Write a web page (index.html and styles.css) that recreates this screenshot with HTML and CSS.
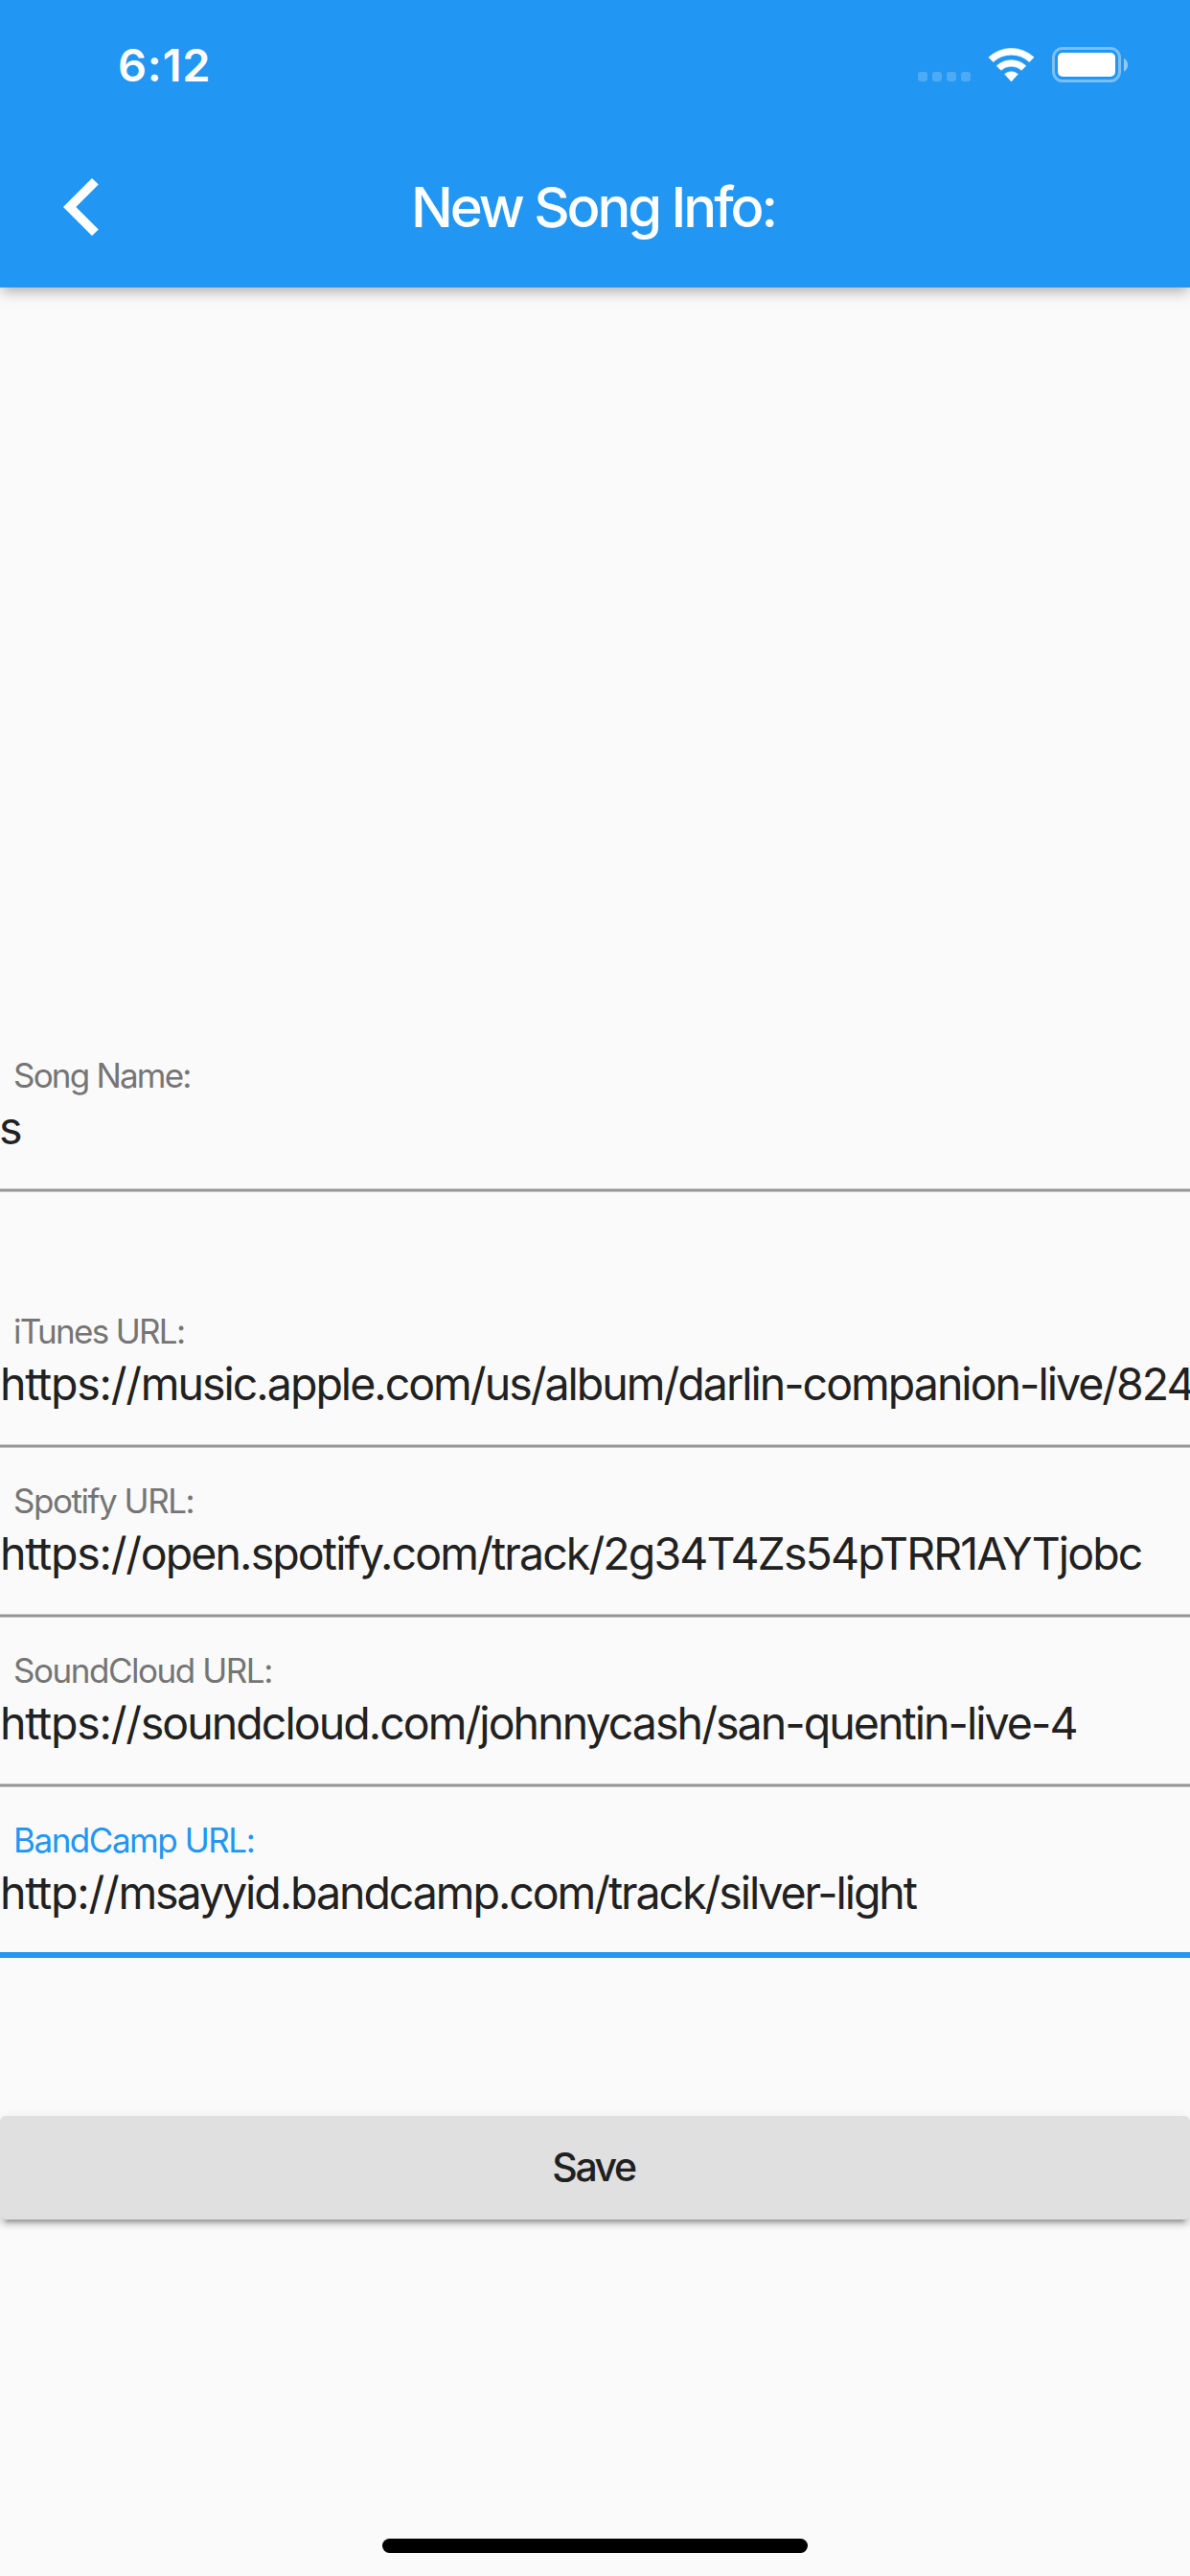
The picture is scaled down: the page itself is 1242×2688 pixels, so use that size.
FILE: index.html
```html
<!DOCTYPE html>
<html lang="en">
<head>
<meta charset="utf-8">
<title>New Song Info</title>
<link rel="stylesheet" href="styles.css">
</head>
<body>
<div class="screen">
  <header class="app-header">
    <div class="status-bar">
      <span class="time">6:12</span>
      <div class="status-icons">
        <svg class="signal" width="55" height="10" viewBox="0 0 55 10"><rect width="10" height="10" rx="3"/><rect x="15" width="10" height="10" rx="3"/><rect x="30" width="10" height="10" rx="3"/><rect x="45" width="10" height="10" rx="3"/></svg>
        <svg class="wifi" width="49" height="37" viewBox="0 0 49 37"><path d="M.9 10.8A34.500 34.500 0 0 1 48.100 10.800L43.300 15.600A27.500 27.500 0 0 0 5.700 15.600ZM9.200 19.700A22.500 22.500 0 0 1 39.800 19.700L35.200 24.300A16 16 0 0 0 13.800 24.300ZM17.600 28.300A10.500 10.500 0 0 1 31.400 28.300L24.500 36Z" fill="#fff" stroke="#fff" stroke-width=".6" stroke-linejoin="round"/></svg>
        <svg class="battery" width="80" height="37" viewBox="0 0 80 37"><rect x="1.500" y="1.500" width="69" height="34" rx="9.500" fill="none" stroke="#fff" stroke-opacity=".4" stroke-width="3"/><rect x="6" y="6" width="60" height="25" rx="5" fill="#fff"/><path d="M75 12C80.300 14 80.300 23.500 75 25.500Z" fill="#fff" fill-opacity=".5"/></svg>
      </div>
    </div>
    <div class="toolbar">
      <svg class="back" width="38" height="60" viewBox="0 0 38 60"><path d="M30 0L36.800 6.500L13.300 30L36.800 53.500L30 60L0 30Z" fill="#fff"/></svg>
      <h1 class="title">New Song Info:</h1>
      <span class="toolbar-end"></span>
    </div>
  </header>
  <main class="form">
    <div class="field song">
      <div class="label song-label">Song Name:</div>
      <div class="value single">s</div>
    </div>
    <div class="field">
      <div class="label itunes-label">iTunes URL:</div>
      <div class="value itunes"><span class="scheme">https://</span>music.apple.com/us/album/darlin-companion-live/824</div>
    </div>
    <div class="field">
      <div class="label">Spotify URL:</div>
      <div class="value spotify"><span class="scheme">https://</span>open.spotify.com/track/2g34T4Zs54pTRR1AYTjobc</div>
    </div>
    <div class="field">
      <div class="label">SoundCloud URL:</div>
      <div class="value soundcloud"><span class="scheme">https://</span>soundcloud.com/johnnycash/san-quentin-live-4</div>
    </div>
    <div class="field focused">
      <div class="label">BandCamp URL:</div>
      <div class="value bandcamp"><span class="scheme">http://</span>msayyid.bandcamp.com/track/silver-light</div>
    </div>
    <button class="save" type="button">Save</button>
  </main>
  <footer class="home"><div class="home-bar"></div></footer>
</div>
</body>
</html>
```
FILE: styles.css
```css
* { box-sizing: border-box; }
body {
  margin: 0;
  background: #fafafa;
  font-family: Inter, "Liberation Sans", sans-serif;
}
.screen {
  width: 1242px;
  height: 2688px;
  display: flex;
  flex-direction: column;
  overflow: hidden;
}
.app-header {
  height: 300px;
  flex: none;
  background: #2196f3;
  color: #fff;
  box-shadow: 0 6px 12px -3px rgba(0,0,0,.2), 0 6px 15px 0 rgba(0,0,0,.13);
}
.status-bar {
  height: 132px;
  padding: 39px 64px 0 123px;
  display: flex;
  justify-content: space-between;
  align-items: flex-start;
}
.time {
  font-size: 47px;
  font-weight: 600;
  line-height: 57px;
  letter-spacing: .8px;
}
.status-icons { display: flex; padding-top: 10px; }
.signal { margin: 26px 18px 0 0; fill: #fff; fill-opacity: .2; }
.wifi { margin-right: 18px; }
.toolbar {
  height: 168px;
  padding: 0 66px;
  display: grid;
  grid-template-columns: 38px 1fr 38px;
  align-items: center;
}
.title {
  margin: 0;
  padding-right: 4px;
  text-align: center;
  font-size: 58px;
  font-weight: 500;
  line-height: 70px;
  letter-spacing: -3.08px;
}
.form { flex: 1; padding-top: 767px; }
.field {
  position: relative;
  padding: 34px 0 35px;
  border-bottom: 4px solid #c6c6c6;
}
/* Darker core of the hairline, softened on both edges by the border. */
.field::after {
  content: "";
  position: absolute;
  left: 0;
  right: 0;
  bottom: -3px;
  height: 2px;
  background: #959595;
}
.song { margin-bottom: 90px; }
.label {
  padding-left: 14px;
  margin-bottom: 6px;
  font-size: 35px;
  line-height: 42px;
  letter-spacing: -1.46px;
  color: #757575;
}
.song-label { letter-spacing: -1.8px; }
.itunes-label { letter-spacing: -1.7px; }
.value {
  height: 56px;
  font-size: 46.5px;
  line-height: 56px;
  color: #212121;
  white-space: nowrap;
  overflow: hidden;
}
.single { text-indent: -1px; }
.scheme { letter-spacing: -1.25px; }
.itunes { letter-spacing: -1.99px; }
.spotify { letter-spacing: -1.885px; }
.soundcloud { letter-spacing: -1.95px; }
.bandcamp { letter-spacing: -2.06px; }
.focused { padding-bottom: 34px; border-bottom: 6px solid #2196f3; }
.focused::after { display: none; }
.focused .label { color: #2196f3; }
.save {
  display: block;
  width: 100%;
  height: 108px;
  margin-top: 165px;
  padding: 0 3px 2px 0;
  border: 0;
  border-radius: 6px;
  background: #e0e0e0;
  color: #212121;
  font: 500 41px/50px Inter, "Liberation Sans", sans-serif;
  letter-spacing: -2.4px;
  box-shadow: 0 9px 3px -6px rgba(0,0,0,.2), 0 6px 6px 0 rgba(0,0,0,.14), 0 3px 12px 0 rgba(0,0,0,.1);
}
.home {
  height: 39px;
  flex: none;
  display: flex;
  justify-content: center;
  align-items: flex-start;
}
.home-bar { width: 444px; height: 15px; border-radius: 8px; background: #000; }
```
